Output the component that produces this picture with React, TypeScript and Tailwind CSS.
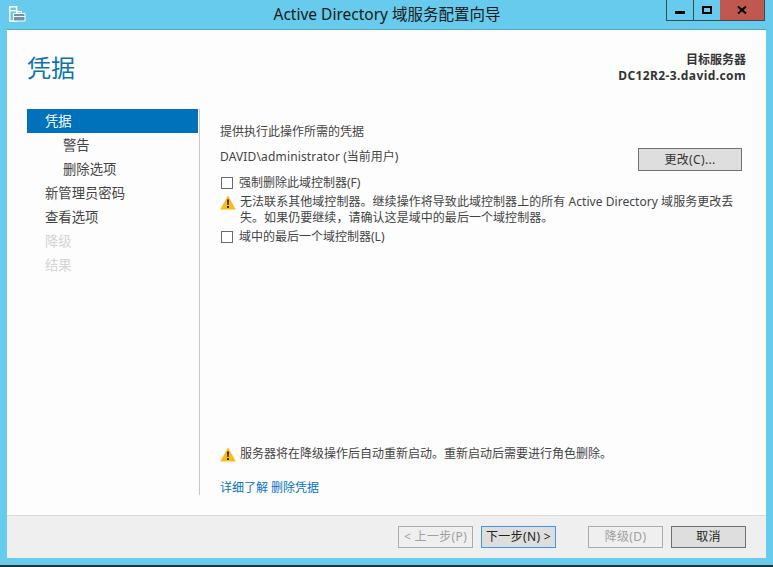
const FONT = "font-['Noto_Sans','Noto_Sans_CJK_SC',sans-serif]";

const NAV_ITEMS = [
  { label: "凭据", indent: "pl-[18px]", tone: "bg-[#0072bc] text-white" },
  { label: "警告", indent: "pl-[36px]", tone: "text-[#444]" },
  { label: "删除选项", indent: "pl-[36px]", tone: "text-[#444]" },
  { label: "新管理员密码", indent: "pl-[18px]", tone: "text-[#444]" },
  { label: "查看选项", indent: "pl-[18px]", tone: "text-[#444]" },
  { label: "降级", indent: "pl-[18px]", tone: "text-[#d4d4d4]" },
  { label: "结果", indent: "pl-[18px]", tone: "text-[#d4d4d4]" },
];

function WizardIcon() {
  return (
    <svg width="17" height="17" viewBox="0 0 17 17" className="block">
      <path d="M0.7 1.7h7v14.3h-7z" fill="#66cbec" stroke="#fff" strokeWidth="1.4" />
      <path d="M0.7 5.7h7" stroke="#fff" strokeWidth="1.4" />
      <path d="M4.5 8.5h11.5v7.5H4.5z" fill="#6f93a8" stroke="#fff" strokeWidth="1" />
      <path d="M8 8.5V6.7h4.5v1.8" fill="none" stroke="#fff" strokeWidth="1.2" />
      <path d="M4.5 11.5h11.5" stroke="#fff" strokeWidth="0.9" />
    </svg>
  );
}

function WarningIcon() {
  return (
    <svg width="16" height="15" viewBox="0 0 16 15" className="block shrink-0">
      <path d="M8 0.5 15.8 14.5H0.2Z" fill="#fdbb14" />
      <path d="M7 4.5h2l-.3 5.5H7.3Z" fill="#2b2b2b" />
      <rect x="7" y="11" width="2" height="2" fill="#2b2b2b" />
    </svg>
  );
}

function CheckBox({ label }: { label: string }) {
  return (
    <label className="flex items-center">
      <span className="ml-px h-[12px] w-[12px] shrink-0 border border-[#6a6a6a] bg-white" />
      <span className="ml-[6px] leading-[16px]">{label}</span>
    </label>
  );
}

function WizardButton({
  label,
  tone,
}: {
  label: string;
  tone: string;
}) {
  return (
    <button
      type="button"
      className={`h-[22px] w-[75px] border text-[12px] leading-none tracking-[0.35px] ${tone}`}
    >
      {label}
    </button>
  );
}

export default function App() {
  return (
    <div
      className={`${FONT} flex h-[567px] w-[773px] flex-col overflow-hidden bg-[#66cbec] text-[12px] text-[#444]`}
    >
      <div className="flex h-[30px] shrink-0 items-start">
        <div className="ml-[9px] mt-[5px] w-[17px] shrink-0">
          <WizardIcon />
        </div>
        <div className="flex-1 pl-[82px] pt-[4px] text-center text-[15.5px] leading-[20px] text-[#1a1a1a]">
          Active Directory 域服务配置向导
        </div>
        <div className="mr-[8px] flex h-[21px] shrink-0 border-x border-b border-[#3f4a52]">
          <div className="flex w-[27px] items-center justify-center border-r border-[#3f4a52]">
            <span className="mt-[4px] h-[3px] w-[10px] bg-black" />
          </div>
          <div className="flex w-[26px] items-center justify-center">
            <span className="h-[8px] w-[10px] border-2 border-black" />
          </div>
          <div className="flex w-[44px] items-center justify-center bg-[#c0584f]">
            <svg width="10" height="8" viewBox="0 0 10 8" className="block">
              <path d="M1 0.5 9 7.5M9 0.5 1 7.5" stroke="#000" strokeWidth="2" />
            </svg>
          </div>
        </div>
      </div>

      <div className="mx-[7px] flex h-[528px] shrink-0 flex-col bg-[#fdfdfd] shadow-[0_-1px_0_#5ba6bf]">
        <div className="flex h-[79px] shrink-0 items-start justify-between pl-[20px] pr-[20px]">
          <h1 className="mt-[18px] text-[24px] font-normal leading-[40px] text-[#0f74ae]">
            凭据
          </h1>
          <div className="mt-[22px] text-right text-[12px] font-bold leading-[16px] text-[#333]">
            <div>目标服务器</div>
            <div className="tracking-[0.4px]">DC12R2-3.david.com</div>
          </div>
        </div>

        <div className="flex h-[386px] shrink-0 pl-[20px]">
          <nav className="h-full w-[172px] shrink-0 pr-px">
            {NAV_ITEMS.map((item) => (
              <div
                key={item.label}
                className={`h-[24px] text-[13.33px] leading-[24px] ${item.indent} ${item.tone}`}
              >
                {item.label}
              </div>
            ))}
          </nav>
          <div className="flex h-full w-[543px] shrink-0 flex-col border-l border-[#c8c8c8] pl-[20px]">
            <div className="mt-[15px] leading-[16px]">提供执行此操作所需的凭据</div>
            <div className="mt-[9px] flex items-start justify-between">
              <div className="leading-[16px]">
                <span className="tracking-[0.15px]">DAVID\administrator</span> (当前用户)
              </div>
              <button
                type="button"
                className="-mt-[1px] h-[23px] w-[104px] border border-[#707070] bg-[#dedede] text-[12px] leading-none tracking-[0.35px] text-[#333]"
              >
                更改(C)...
              </button>
            </div>
            <div className="mt-[4px]">
              <CheckBox label="强制删除此域控制器(F)" />
            </div>
            <div className="mt-[3px] flex items-start">
              <div className="mt-[1px]">
                <WarningIcon />
              </div>
              <p className="ml-[4px] w-[500px] leading-[16px] tracking-[0.05px]">
                无法联系其他域控制器。继续操作将导致此域控制器上的所有 Active Directory 域服务更改丢失。如果仍要继续，请确认这是域中的最后一个域控制器。
              </p>
            </div>
            <div className="mt-[3px]">
              <CheckBox label="域中的最后一个域控制器(L)" />
            </div>
            <div className="mt-auto flex items-center">
              <WarningIcon />
              <span className="ml-[4px] leading-[16px]">
                服务器将在降级操作后自动重新启动。重新启动后需要进行角色删除。
              </span>
            </div>
            <div className="-mb-[1px] mt-[18px] leading-[16px] text-[#0a72c4]">
              详细了解 删除凭据
            </div>
          </div>
        </div>

        <div className="h-[20px] shrink-0" />

        <div className="flex flex-1 items-center justify-end gap-[8px] border-t border-[#d9d9d9] bg-[#efefef] pr-[20px]">
          <WizardButton label="< 上一步(P)" tone="border-[#acacac] bg-[#efefef] text-[#a0a0a0]" />
          <WizardButton label="下一步(N) >" tone="border-[#3c97e8] bg-[#dedede] text-[#222]" />
          <div className="w-[16px]" />
          <WizardButton label="降级(D)" tone="border-[#acacac] bg-[#efefef] text-[#a0a0a0]" />
          <WizardButton label="取消" tone="border-[#707070] bg-[#dedede] text-[#222]" />
        </div>
      </div>

      <div className="flex-1" />
      <div className="h-[2px] shrink-0 bg-[#2a3238]" />
    </div>
  );
}
